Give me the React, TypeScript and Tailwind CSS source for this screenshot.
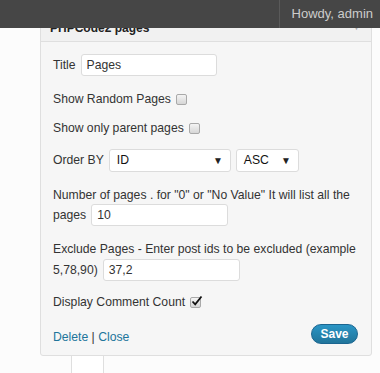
import React from "react";

const font = { fontFamily: '"Liberation Sans", Arial, sans-serif' };

function Box({ checked = false }: { checked?: boolean }) {
  return (
    <span className="relative ml-[5px] inline-block h-[11px] w-[11px] rounded-[2px] border border-[#a9a9a9] bg-gradient-to-b from-[#f4f4f4] to-[#d6d6d6] align-middle">
      {checked && (
        <svg className="absolute left-[0px] top-[-3px]" width="12" height="12" viewBox="0 0 12 12">
          <path d="M1.5 6.5 L4.2 9.3 L10.5 1.5" fill="none" stroke="#111" strokeWidth="1.8" />
        </svg>
      )}
    </span>
  );
}

function Select({ value, w }: { value: string; w: string }) {
  return (
    <div className={`flex h-[23px] ${w} items-center justify-between rounded-[3px] border border-[#dcdcdc] bg-white pl-[7px] pr-[7px] text-[12.2px] text-[#111]`}>
      <span>{value}</span>
      <span className="text-[10px] text-[#222]">▼</span>
    </div>
  );
}

function Input({ value, w, h = "h-[22px]" }: { value: string; w: string; h?: string }) {
  return (
    <div className={`flex ${h} ${w} items-center rounded-[3px] border border-[#dcdcdc] bg-white pl-[5px] text-[12.2px] text-[#333]`}>
      {value}
    </div>
  );
}

export default function App() {
  return (
    <div className="h-[373px] w-[380px] overflow-hidden bg-[#fcfcfc] text-[12.2px] text-[#333]" style={font}>
      <div className="relative z-10 flex h-[28px] w-full justify-end bg-[#464646]">
        <div className="flex h-full items-center border-l border-[#5a5a5a] pl-[12px] pr-[7px] text-[13px] text-[#cccccc]">
          Howdy, admin
        </div>
      </div>
      <div className="ml-[40px] mt-[-14px] w-[332px] rounded-b-[3px] border border-[#dfdfdf] bg-[#f6f6f6]">
        <div className="flex h-[27px] items-center justify-between border-b border-[#dfdfdf] bg-[#f1f1f1] pl-[9px] pr-[10px]">
          <span className="text-[12px] font-bold text-[#222]">PHPCode2 pages</span>
          <span className="text-[9px] text-[#aaa]">▼</span>
        </div>
        <div className="px-[12px] pb-[10px] pt-[12px]">
          <div className="flex h-[22px] items-center gap-[5px]">
            <span>Title</span>
            <Input value="Pages" w="w-[136px]" />
          </div>
          <div className="mt-[15px] flex h-[16px] items-center">
            <span>Show Random Pages</span>
            <Box />
          </div>
          <div className="mt-[13px] flex h-[16px] items-center">
            <span>Show only parent pages</span>
            <Box />
          </div>
          <div className="mt-[13px] flex h-[23px] items-center">
            <span>Order BY</span>
            <div className="ml-[5px]">
              <Select value="ID" w="w-[122px]" />
            </div>
            <div className="ml-[5px]">
              <Select value="ASC" w="w-[63px]" />
            </div>
          </div>
          <div className="mt-[15px] h-[16px] leading-[16px] whitespace-nowrap">
            Number of pages . for "0" or "No Value" It will list all the
          </div>
          <div className="mt-[1px] flex h-[22px] items-center gap-[5px]">
            <span>pages</span>
            <Input value="10" w="w-[137px]" />
          </div>
          <div className="mt-[15px] h-[16px] leading-[16px] whitespace-nowrap">
            Exclude Pages - Enter post ids to be excluded (example
          </div>
          <div className="mt-[2px] flex h-[22px] items-center gap-[5px]">
            <span>5,78,90)</span>
            <Input value="37,2" w="w-[137px]" />
          </div>
          <div className="mt-[13px] flex h-[16px] items-center">
            <span>Display Comment Count</span>
            <Box checked />
          </div>
          <div className="mt-[14px] flex items-start justify-between">
            <div className="mt-[5px] leading-[16px]">
              <span className="text-[#21759b]">Delete</span>
              <span className="text-[#333]"> | </span>
              <span className="text-[#21759b]">Close</span>
            </div>
            <div className="mr-[1px] flex h-[20px] w-[47px] items-center justify-center rounded-full border border-[#1b6590] bg-gradient-to-b from-[#2a95c5] to-[#21759b] text-[12px] font-bold text-white">
              Save
            </div>
          </div>
        </div>
      </div>
      <div className="flex h-[30px]">
        <div className="ml-[71px] w-[33px] border-x border-[#dfdfdf] bg-white" />
      </div>
    </div>
  );
}
